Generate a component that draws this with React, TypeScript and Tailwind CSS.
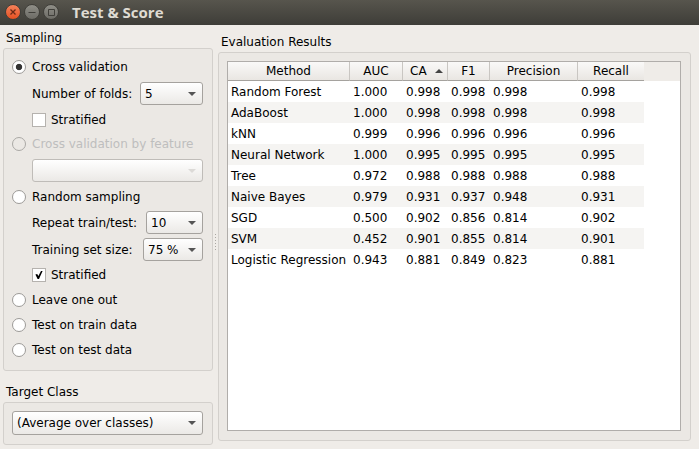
import { useState } from "react";
import type { ReactNode } from "react";

const columns = [
  { name: "Method", width: "w-[122px]" },
  { name: "AUC", width: "w-[53px]" },
  { name: "CA", width: "w-[45px]" },
  { name: "F1", width: "w-[42px]" },
  { name: "Precision", width: "w-[88px]" },
  { name: "Recall", width: "w-[66px]" },
];

const results = [
  ["Random Forest", "1.000", "0.998", "0.998", "0.998", "0.998"],
  ["AdaBoost", "1.000", "0.998", "0.998", "0.998", "0.998"],
  ["kNN", "0.999", "0.996", "0.996", "0.996", "0.996"],
  ["Neural Network", "1.000", "0.995", "0.995", "0.995", "0.995"],
  ["Tree", "0.972", "0.988", "0.988", "0.988", "0.988"],
  ["Naive Bayes", "0.979", "0.931", "0.937", "0.948", "0.931"],
  ["SGD", "0.500", "0.902", "0.856", "0.814", "0.902"],
  ["SVM", "0.452", "0.901", "0.855", "0.814", "0.901"],
  ["Logistic Regression", "0.943", "0.881", "0.849", "0.823", "0.881"],
];

function WindowButton({ label, close, children }: { label: string; close?: boolean; children: ReactNode }) {
  return (
    <button
      type="button"
      aria-label={label}
      className={
        "flex size-4 items-center justify-center rounded-full border border-[#403f3a] " +
        (close ? "bg-linear-to-b from-[#f58159] to-[#e4501f]" : "bg-linear-to-b from-[#8f8e87] to-[#6d6c66]")
      }
    >
      <svg viewBox="0 0 14 14" className="size-3.5" fill="none" stroke={close ? "#6b2a16" : "#403f3a"} strokeWidth="1">
        {children}
      </svg>
    </button>
  );
}

function Combo({
  id,
  label,
  options,
  className,
  disabled,
}: {
  id: string;
  label?: string;
  options: string[];
  className: string;
  disabled?: boolean;
}) {
  return (
    <span className={"relative block " + className}>
      <select
        id={id}
        aria-label={label}
        disabled={disabled}
        className="block h-full w-full appearance-none rounded-[3px] border border-[#a5a29e] bg-linear-to-b from-white to-[#ebe9e6] pr-5 pl-1 text-black disabled:border-[#bfbcb8] disabled:opacity-100"
      >
        {options.map((o) => (
          <option key={o}>{o}</option>
        ))}
      </select>
      <svg
        viewBox="0 0 8 4"
        className={
          "pointer-events-none absolute inset-y-0 right-[7px] my-auto h-1 w-2 " + (disabled ? "fill-[#dcdad7]" : "fill-[#555]")
        }
      >
        <path d="M0 0H8L4 4Z" />
      </svg>
    </span>
  );
}

function Radio({
  label,
  value,
  selected,
  onSelect,
  disabled,
}: {
  label: string;
  value: string;
  selected: string;
  onSelect: (v: string) => void;
  disabled?: boolean;
}) {
  return (
    <label className={"flex h-4 items-center gap-1.5 " + (disabled ? "text-[#bebebe]" : "")}>
      <input
        type="radio"
        name="sampling"
        value={value}
        checked={selected === value}
        onChange={() => onSelect(value)}
        disabled={disabled}
        className="size-3.5 shrink-0 appearance-none rounded-full border border-[#9c9a97] bg-white checked:bg-[radial-gradient(circle,#333_2.8px,#fff_3.6px)] disabled:border-[#aaa8a5] disabled:bg-[#ebe8e4]"
      />
      {label}
    </label>
  );
}

function Check({ label, on }: { label: string; on?: boolean }) {
  return (
    <label className="ml-5 flex h-4 items-center gap-[5px]">
      <span className="relative block size-3.5">
        <input
          type="checkbox"
          defaultChecked={on}
          className="peer block size-3.5 appearance-none border border-[#b5b2ae] bg-white"
        />
        <svg
          viewBox="0 0 14 14"
          className="pointer-events-none absolute inset-0 hidden size-3.5 peer-checked:block"
          fill="#000"
        >
          <path d="M3.4 6.6L5.2 5.9L6.4 8L9 3H10.6L7 11H5.6Z" />
        </svg>
      </span>
      {label}
    </label>
  );
}

const panel = "rounded-[3px] border border-[#d3d0cc] bg-[#ebe8e4]";

export default function App() {
  const [sampling, setSampling] = useState("folds");

  return (
    <div className="flex min-h-screen flex-col bg-[#efece8] font-['DejaVu_Sans',sans-serif] text-[12px] leading-4 text-black">
      <header className="flex h-[25px] items-center gap-[3px] bg-linear-to-b from-[#57554d] to-[#3e3d38] pb-0.5 pl-[5px]">
        <WindowButton label="Close" close>
          <path d="M4.5 4.5L9.5 9.5M9.5 4.5L4.5 9.5" strokeWidth="1.3" />
        </WindowButton>
        <WindowButton label="Minimize">
          <path d="M3.5 7.5H10.5" />
        </WindowButton>
        <WindowButton label="Maximize">
          <path d="M4.5 4.5H10.5V10.5H4.5Z" />
        </WindowButton>
        <h1 className="ml-2.5 font-['Open_Sans',sans-serif] text-[15px] font-bold text-[#dfdbd2]">Test &amp; Score</h1>
      </header>

      <main className="flex flex-1">
        <div className="flex w-[213px] shrink-0 flex-col pl-[3px]">
          <h2 className="mt-[5px] pl-[3px]">Sampling</h2>
          <section className={"mt-0.5 flex flex-col px-2 pt-2.5 pb-3 " + panel}>
            <Radio label="Cross validation" value="folds" selected={sampling} onSelect={setSampling} />
            <div className="mt-[7px] ml-5 flex items-center justify-between">
              <label htmlFor="folds">Number of folds:</label>
              <Combo id="folds" options={["5", "10", "20"]} className="mr-px h-[23px] w-[63px]" />
            </div>
            <div className="mt-[7px]">
              <Check label="Stratified" />
            </div>
            <div className="mt-2">
              <Radio label="Cross validation by feature" value="feature" selected={sampling} onSelect={setSampling} disabled />
            </div>
            <Combo id="feature" label="Feature" options={[""]} className="mt-[7px] mr-px ml-5 h-[23px]" disabled />
            <div className="mt-[7px]">
              <Radio label="Random sampling" value="random" selected={sampling} onSelect={setSampling} />
            </div>
            <div className="mt-1.5 ml-5 flex items-center justify-between">
              <label htmlFor="repeat">Repeat train/test:</label>
              <Combo id="repeat" options={["10", "20", "50"]} className="mr-px h-[23px] w-[57px]" />
            </div>
            <div className="mt-1 ml-5 flex items-center justify-between">
              <label htmlFor="size">Training set size:</label>
              <Combo id="size" options={["75 %", "80 %", "90 %"]} className="mr-px h-[23px] w-[60px]" />
            </div>
            <div className="mt-1.5">
              <Check label="Stratified" on />
            </div>
            <div className="mt-[9px] flex flex-col gap-[9px]">
              <Radio label="Leave one out" value="loo" selected={sampling} onSelect={setSampling} />
              <Radio label="Test on train data" value="train" selected={sampling} onSelect={setSampling} />
              <Radio label="Test on test data" value="test" selected={sampling} onSelect={setSampling} />
            </div>
          </section>
          <h2 className="mt-[13px] pl-[3px]">Target Class</h2>
          <section className={"mt-0.5 mb-1 px-2 pt-2 pb-[9px] " + panel}>
            <Combo id="target" label="Target class" options={["(Average over classes)"]} className="mr-px h-6" />
          </section>
        </div>

        <div className="flex w-[5px] shrink-0 items-center justify-center pt-2.5">
          <div className="h-4 w-px bg-[repeating-linear-gradient(to_bottom,#aaa7a2_0_1px,transparent_1px_3px)]" />
        </div>

        <div className="flex min-w-0 flex-1 flex-col pr-2 pb-2">
          <h2 className="mt-[9px] pl-[3px]">Evaluation Results</h2>
          <section className={"mt-0.5 flex flex-1 flex-col px-2 pt-2 pb-[9px] " + panel}>
            <div className="mr-px flex-1 border border-[#b0adaa] bg-white">
              <div className="bg-[linear-gradient(#efece8_19px,transparent_19px)]">
                <table className="w-[416px] table-fixed border-separate border-spacing-0">
                  <thead>
                    <tr className="h-[19px]">
                      {columns.map((c) => (
                        <th
                          key={c.name}
                          scope="col"
                          aria-sort={c.name === "CA" ? "descending" : undefined}
                          className={
                            "border-r border-b border-r-[#c9c6c2] border-b-[#a5a29e] bg-linear-to-b from-[#faf9f8] to-[#e9e6e2] p-0 font-normal last:border-r-0 " +
                            c.width
                          }
                        >
                          {c.name === "CA" ? (
                            <span className="flex items-center justify-between pr-1 pl-[7px]">
                              CA
                              <svg viewBox="0 0 8 4" className="h-1 w-2 fill-[#444]">
                                <path d="M0 4H8L4 0Z" />
                              </svg>
                            </span>
                          ) : (
                            c.name
                          )}
                        </th>
                      ))}
                    </tr>
                  </thead>
                  <tbody>
                    {results.map((row) => (
                      <tr key={row[0]} className="h-[21px] even:bg-[#f5f4f2]">
                        {row.map((cell, i) => (
                          <td key={i} className="py-0 pr-0 pl-[3px] whitespace-nowrap">
                            {cell}
                          </td>
                        ))}
                      </tr>
                    ))}
                  </tbody>
                </table>
              </div>
            </div>
          </section>
        </div>
      </main>
    </div>
  );
}
